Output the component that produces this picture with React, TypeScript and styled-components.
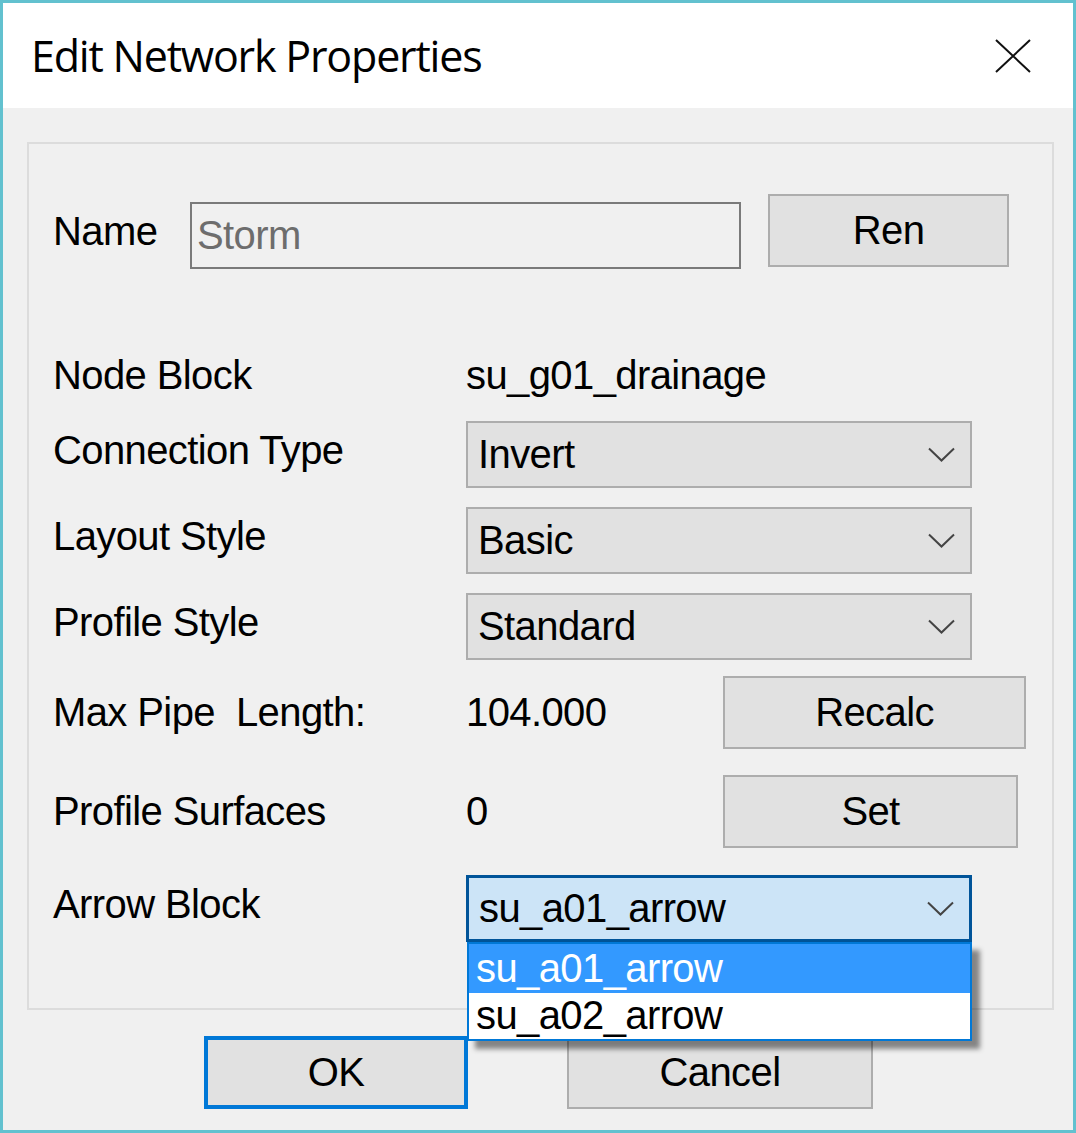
import React from "react";
import styled, { createGlobalStyle } from "styled-components";

const GlobalStyle = createGlobalStyle`
  body {
    margin: 0;
    font-family: "Liberation Sans", Arial, sans-serif;
  }
`;

const Window = styled.div`
  width: 1076px;
  height: 1133px;
  box-sizing: border-box;
  border: 3px solid #62c1cf;
  background: #f0f0f0;
  display: flex;
  flex-direction: column;
`;

const TitleBar = styled.div`
  height: 105px;
  flex-shrink: 0;
  background: #fff;
  display: flex;
  align-items: center;
  justify-content: space-between;
  padding: 0 42px 0 28px;
`;

const Title = styled.span`
  font-family: "Open Sans", "Noto Sans", sans-serif;
  font-size: 43px;
  letter-spacing: -1.2px;
  color: #000;
`;

const CloseIcon = () => (
  <svg width="36" height="34" viewBox="0 0 36 34">
    <path d="M1 1 L35 33 M35 1 L1 33" stroke="#111" strokeWidth="2" fill="none" />
  </svg>
);

const Body = styled.div`
  padding: 34px 19px 0 24px;
  display: flex;
  flex-direction: column;
`;

const GroupBox = styled.div`
  height: 868px;
  box-sizing: border-box;
  border: 2px solid #dcdcdc;
  padding-left: 24px;
  display: flex;
  flex-direction: column;
`;

const Row = styled.div<{ $top: number; $height: number }>`
  display: flex;
  align-items: center;
  margin-top: ${(p) => p.$top}px;
  height: ${(p) => p.$height}px;
  position: relative;
`;

const Label = styled.div<{ $width?: number; $lift?: number }>`
  width: ${(p) => p.$width ?? 413}px;
  flex-shrink: 0;
  font-size: 40px;
  letter-spacing: -0.6px;
  color: #000;
  margin-bottom: ${(p) => (p.$lift ?? 0) * 2}px;
`;

const Value = styled.div`
  width: 257px;
  flex-shrink: 0;
  font-size: 40px;
  letter-spacing: -0.6px;
  color: #000;
`;

const TextBox = styled.div`
  width: 551px;
  height: 67px;
  box-sizing: border-box;
  align-self: flex-end;
  border: 2px solid #7a7a7a;
  background: #f0f0f0;
  display: flex;
  align-items: center;
  padding-left: 5px;
  font-size: 40px;
  letter-spacing: -0.6px;
  color: #6d6d6d;
`;

const Button = styled.div<{ $width: number; $primary?: boolean }>`
  width: ${(p) => p.$width}px;
  height: 73px;
  box-sizing: border-box;
  flex-shrink: 0;
  background: #e1e1e1;
  border: ${(p) => (p.$primary ? "4px solid #0078d7" : "2px solid #adadad")};
  display: flex;
  align-items: center;
  justify-content: center;
  font-size: 40px;
  letter-spacing: -0.6px;
  color: #000;
`;

const RenButton = styled(Button)`
  align-self: flex-start;
  margin-left: 27px;
`;

const ComboWrap = styled.div`
  position: relative;
  width: 506px;
`;

const Combo = styled.div<{ $focused?: boolean }>`
  height: 67px;
  box-sizing: border-box;
  background: ${(p) => (p.$focused ? "#cce4f7" : "#e1e1e1")};
  border: ${(p) => (p.$focused ? "3px solid #005499" : "2px solid #adadad")};
  display: flex;
  align-items: center;
  justify-content: space-between;
  padding: 0 15px 0 10px;
  font-size: 40px;
  letter-spacing: -0.6px;
  color: #000;
`;

const Chevron = () => (
  <svg width="27" height="15" viewBox="0 0 27 15">
    <path d="M1 1.5 L13.5 13.5 L26 1.5" stroke="#444" strokeWidth="2" fill="none" />
  </svg>
);

const DropList = styled.div`
  position: absolute;
  top: 100%;
  left: 1px;
  right: 0;
  z-index: 5;
  background: #fff;
  border: 2px solid #0078d7;
  box-shadow: 8px 8px 5px rgba(0, 0, 0, 0.45);
`;

const DropItem = styled.div<{ $selected?: boolean }>`
  height: ${(p) => (p.$selected ? 49 : 46)}px;
  display: flex;
  align-items: center;
  padding-left: 7px;
  font-size: 40px;
  letter-spacing: -0.6px;
  background: ${(p) => (p.$selected ? "#3399ff" : "#fff")};
  color: ${(p) => (p.$selected ? "#fff" : "#000")};
`;

const ButtonRow = styled.div`
  display: flex;
  gap: 99px;
  margin-top: 26px;
  padding-left: 177px;
`;

type ComboRowProps = {
  label: string;
  value: string;
  top: number;
};

const ComboRow = ({ label, value, top }: ComboRowProps) => (
  <Row $top={top} $height={67}>
    <Label $lift={4}>{label}</Label>
    <ComboWrap>
      <Combo>
        <span>{value}</span>
        <Chevron />
      </Combo>
    </ComboWrap>
  </Row>
);

export default function App() {
  return (
    <>
      <GlobalStyle />
      <Window>
        <TitleBar>
          <Title>Edit Network Properties</Title>
          <CloseIcon />
        </TitleBar>
        <Body>
          <GroupBox>
            <Row $top={50} $height={75}>
              <Label $width={137}>Name</Label>
              <TextBox>Storm</TextBox>
              <RenButton $width={241}>Ren</RenButton>
            </Row>
            <Row $top={81} $height={50}>
              <Label>Node Block</Label>
              <Value>su_g01_drainage</Value>
            </Row>
            <ComboRow label="Connection Type" value="Invert" top={21} />
            <ComboRow label="Layout Style" value="Basic" top={19} />
            <ComboRow label="Profile Style" value="Standard" top={19} />
            <Row $top={16} $height={73}>
              <Label>Max Pipe&nbsp; Length:</Label>
              <Value>104.000</Value>
              <Button $width={303}>Recalc</Button>
            </Row>
            <Row $top={25} $height={74}>
              <Label>Profile Surfaces</Label>
              <Value>0</Value>
              <Button $width={295}>Set</Button>
            </Row>
            <Row $top={26} $height={68}>
              <Label $lift={4}>Arrow Block</Label>
              <ComboWrap>
                <Combo $focused>
                  <span>su_a01_arrow</span>
                  <Chevron />
                </Combo>
                <DropList>
                  <DropItem $selected>su_a01_arrow</DropItem>
                  <DropItem>su_a02_arrow</DropItem>
                </DropList>
              </ComboWrap>
            </Row>
          </GroupBox>
          <ButtonRow>
            <Button $width={264} $primary>OK</Button>
            <Button $width={306}>Cancel</Button>
          </ButtonRow>
        </Body>
      </Window>
    </>
  );
}
